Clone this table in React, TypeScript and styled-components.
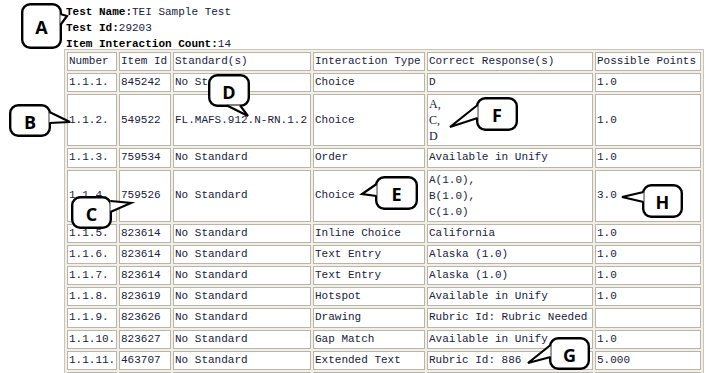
import styled, { createGlobalStyle } from "styled-components";

type Side = "left" | "right" | "bottom";

interface CalloutData {
  letter: string;
  x: number;
  y: number;
  w: number;
  h: number;
  side: Side;
  b1: [number, number];
  b2: [number, number];
  tip: [number, number];
}

interface RowData {
  number: string;
  itemId: string;
  standard: string;
  type: string;
  response: string[];
  points: string;
  list?: "serif" | "mono";
}

const GlobalStyle = createGlobalStyle`
  body {
    margin: 0;
    background: #ffffff;
  }
`;

const Page = styled.div`
  position: relative;
  width: 706px;
  height: 373px;
  overflow: hidden;
  box-sizing: border-box;
  padding: 4px 0 0 64px;
  font-family: "Liberation Mono", "Courier New", monospace;
  font-size: 11px;
  color: #20203a;
`;

const Info = styled.div`
  margin-left: 2px;
  line-height: 16px;
`;

const InfoLine = styled.div`
  white-space: nowrap;
`;

const Label = styled.span`
  font-weight: bold;
  color: #000000;
`;

const Table = styled.table`
  margin-top: -3px;
  width: 640px;
  table-layout: fixed;
  border-collapse: separate;
  border-spacing: 2px;
  border: 1px solid #c9c5ba;
  background: #f1efe8;
`;

const HeadCell = styled.td<{ $w: number }>`
  width: ${({ $w }) => $w}px;
  padding: 1px;
  border: 1px solid #b9b5aa;
  background: #ffffff;
  line-height: 15.2px;
  white-space: nowrap;
  overflow: visible;
`;

const Cell = styled.td`
  padding: 1px;
  border: 1px solid #b9b5aa;
  background: #ffffff;
  line-height: 15.2px;
  white-space: nowrap;
  vertical-align: middle;
`;

const List = styled.div<{ $serif?: boolean }>`
  line-height: 16px;
  font-family: ${({ $serif }) =>
    $serif
      ? `"Liberation Serif", "Times New Roman", serif`
      : `"Liberation Mono", "Courier New", monospace`};
  font-size: ${({ $serif }) => ($serif ? 12 : 11)}px;
`;

const CalloutWrap = styled.div<{ $x: number; $y: number; $w: number; $h: number }>`
  position: absolute;
  left: ${({ $x }) => $x}px;
  top: ${({ $y }) => $y}px;
  width: ${({ $w }) => $w}px;
  height: ${({ $h }) => $h}px;
  pointer-events: none;

  & > svg {
    overflow: visible;
    display: block;
  }
`;

const columns = [
  { title: "Number", w: 46 },
  { title: "Item Id", w: 48 },
  { title: "Standard(s)", w: 134 },
  { title: "Interaction Type", w: 108 },
  { title: "Correct Response(s)", w: 162 },
  { title: "Possible Points", w: 102 },
];

const rows: RowData[] = [
  { number: "1.1.1.", itemId: "845242", standard: "No Standard", type: "Choice", response: ["D"], points: "1.0" },
  {
    number: "1.1.2.",
    itemId: "549522",
    standard: "FL.MAFS.912.N-RN.1.2",
    type: "Choice",
    response: ["A,", "C,", "D"],
    points: "1.0",
    list: "serif",
  },
  { number: "1.1.3.", itemId: "759534", standard: "No Standard", type: "Order", response: ["Available in Unify"], points: "1.0" },
  {
    number: "1.1.4.",
    itemId: "759526",
    standard: "No Standard",
    type: "Choice",
    response: ["A(1.0),", "B(1.0),", "C(1.0)"],
    points: "3.0",
    list: "mono",
  },
  { number: "1.1.5.", itemId: "823614", standard: "No Standard", type: "Inline Choice", response: ["California"], points: "1.0" },
  { number: "1.1.6.", itemId: "823614", standard: "No Standard", type: "Text Entry", response: ["Alaska (1.0)"], points: "1.0" },
  { number: "1.1.7.", itemId: "823614", standard: "No Standard", type: "Text Entry", response: ["Alaska (1.0)"], points: "1.0" },
  { number: "1.1.8.", itemId: "823619", standard: "No Standard", type: "Hotspot", response: ["Available in Unify"], points: "1.0" },
  { number: "1.1.9.", itemId: "823626", standard: "No Standard", type: "Drawing", response: ["Rubric Id: Rubric Needed"], points: "" },
  { number: "1.1.10.", itemId: "823627", standard: "No Standard", type: "Gap Match", response: ["Available in Unify"], points: "1.0" },
  { number: "1.1.11.", itemId: "463707", standard: "No Standard", type: "Extended Text", response: ["Rubric Id: 886"], points: "5.000" },
  { number: "", itemId: "", standard: "", type: "", response: [""], points: "" },
];

const callouts: CalloutData[] = [
  { letter: "A", x: 21, y: 3, w: 41, h: 46, side: "right", b1: [62, 14], b2: [62, 25], tip: [67, 16] },
  { letter: "B", x: 9, y: 104, w: 42, h: 33, side: "right", b1: [51, 112], b2: [51, 123], tip: [70, 122] },
  { letter: "C", x: 71, y: 196, w: 41, h: 33, side: "right", b1: [112, 201], b2: [112, 212], tip: [131, 203] },
  { letter: "D", x: 208, y: 74, w: 42, h: 33, side: "bottom", b1: [227, 107], b2: [240, 107], tip: [248, 116] },
  { letter: "E", x: 375, y: 176, w: 43, h: 34, side: "left", b1: [375, 184], b2: [375, 196], tip: [362, 194] },
  { letter: "F", x: 476, y: 97, w: 42, h: 34, side: "left", b1: [476, 105], b2: [476, 118], tip: [450, 127] },
  { letter: "G", x: 549, y: 337, w: 41, h: 33, side: "left", b1: [549, 345], b2: [549, 357], tip: [528, 363] },
  { letter: "H", x: 642, y: 184, w: 41, h: 34, side: "left", b1: [642, 192], b2: [642, 202], tip: [622, 197] },
];

function Callout({ data }: { data: CalloutData }) {
  const { letter, x, y, w, h, side, b1, b2, tip } = data;
  // move the tail base a little inside the box so it covers the border there
  const inset = (p: [number, number]): string => {
    let px = p[0] - x;
    let py = p[1] - y;
    if (side === "right") px -= 1.6;
    if (side === "left") px += 1.6;
    if (side === "bottom") py -= 1.6;
    return `${px},${py}`;
  };
  const tipLocal = `${tip[0] - x},${tip[1] - y}`;

  return (
    <CalloutWrap $x={x} $y={y} $w={w} $h={h}>
      <svg width={w} height={h} viewBox={`0 0 ${w} ${h}`}>
        <rect x={1.2} y={1.2} width={w - 2.4} height={h - 2.4} rx={8} fill="#ffffff" stroke="#000000" strokeWidth={2.4} />
        <polyline
          points={`${inset(b1)} ${tipLocal} ${inset(b2)}`}
          fill="#ffffff"
          stroke="#000000"
          strokeWidth={2.2}
          strokeLinejoin="miter"
        />
        <text
          x={w / 2}
          y={h / 2 + 1}
          textAnchor="middle"
          dominantBaseline="central"
          fontFamily='"Open Sans", "Liberation Sans", sans-serif'
          fontWeight={700}
          fontSize={18}
          fill="#000000"
        >
          {letter}
        </text>
      </svg>
    </CalloutWrap>
  );
}

export default function App() {
  return (
    <>
      <GlobalStyle />
      <Page>
        <Info>
          <InfoLine>
            <Label>Test Name:</Label>TEI Sample Test
          </InfoLine>
          <InfoLine>
            <Label>Test Id:</Label>29203
          </InfoLine>
          <InfoLine>
            <Label>Item Interaction Count:</Label>14
          </InfoLine>
        </Info>

        <Table>
          <tbody>
            <tr>
              {columns.map((c) => (
                <HeadCell key={c.title} $w={c.w}>
                  {c.title}
                </HeadCell>
              ))}
            </tr>
            {rows.map((r, i) => (
              <tr key={i}>
                <Cell>{r.number || "\u00a0"}</Cell>
                <Cell>{r.itemId || "\u00a0"}</Cell>
                <Cell>{r.standard || "\u00a0"}</Cell>
                <Cell>{r.type || "\u00a0"}</Cell>
                <Cell>
                  {r.list ? (
                    <List $serif={r.list === "serif"}>
                      {r.response.map((line) => (
                        <div key={line}>{line}</div>
                      ))}
                    </List>
                  ) : (
                    r.response[0] || "\u00a0"
                  )}
                </Cell>
                <Cell>{r.points || "\u00a0"}</Cell>
              </tr>
            ))}
          </tbody>
        </Table>

        {callouts.map((c) => (
          <Callout key={c.letter} data={c} />
        ))}
      </Page>
    </>
  );
}
